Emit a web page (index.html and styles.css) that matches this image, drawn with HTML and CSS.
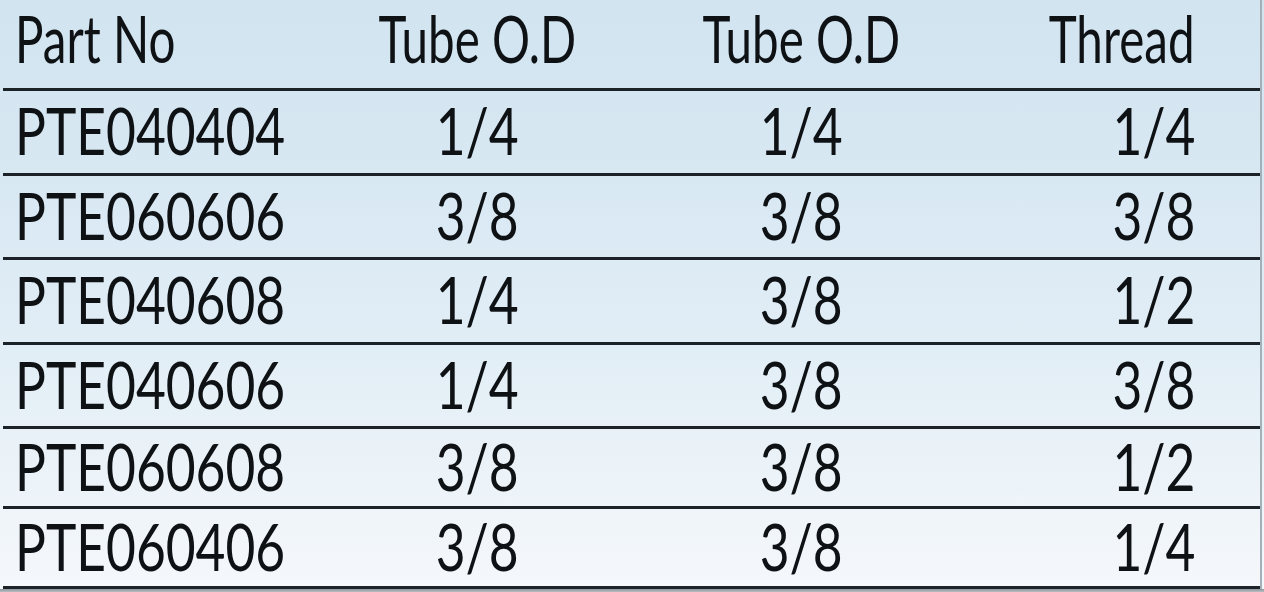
FILE: index.html
```html
<!DOCTYPE html>
<html lang="en">
<head>
<meta charset="utf-8">
<title>Part table</title>
<link rel="stylesheet" href="styles.css">
</head>
<body>
<div class="sheet">
  <div class="table">
    <div class="row head">
      <div class="c c1"><span class="t h">Part No</span></div>
      <div class="c c2"><span class="t h">Tube O.D</span></div>
      <div class="c c3"><span class="t h">Tube O.D</span></div>
      <div class="c c4"><span class="t h">Thread</span></div>
    </div>
    <div class="row">
      <div class="c c1"><span class="t">PTE040404</span></div>
      <div class="c c2"><span class="t">1/4</span></div>
      <div class="c c3"><span class="t">1/4</span></div>
      <div class="c c4"><span class="t">1/4</span></div>
    </div>
    <div class="row">
      <div class="c c1"><span class="t">PTE060606</span></div>
      <div class="c c2"><span class="t">3/8</span></div>
      <div class="c c3"><span class="t">3/8</span></div>
      <div class="c c4"><span class="t">3/8</span></div>
    </div>
    <div class="row">
      <div class="c c1"><span class="t">PTE040608</span></div>
      <div class="c c2"><span class="t">1/4</span></div>
      <div class="c c3"><span class="t">3/8</span></div>
      <div class="c c4"><span class="t">1/2</span></div>
    </div>
    <div class="row">
      <div class="c c1"><span class="t">PTE040606</span></div>
      <div class="c c2"><span class="t">1/4</span></div>
      <div class="c c3"><span class="t">3/8</span></div>
      <div class="c c4"><span class="t">3/8</span></div>
    </div>
    <div class="row">
      <div class="c c1"><span class="t">PTE060608</span></div>
      <div class="c c2"><span class="t">3/8</span></div>
      <div class="c c3"><span class="t">3/8</span></div>
      <div class="c c4"><span class="t">1/2</span></div>
    </div>
    <div class="row">
      <div class="c c1"><span class="t">PTE060406</span></div>
      <div class="c c2"><span class="t">3/8</span></div>
      <div class="c c3"><span class="t">3/8</span></div>
      <div class="c c4"><span class="t">1/4</span></div>
    </div>
  </div>
  <div class="shadow"></div>
</div>
</body>
</html>
```
FILE: styles.css
```css
html, body {
  margin: 0;
  padding: 0;
}
body {
  width: 1264px;
  height: 592px;
  overflow: hidden;
  font-family: Lato, "Open Sans", "Liberation Sans", sans-serif;
  color: #0f1215;
}
.sheet {
  width: 1264px;
  height: 592px;
  display: flex;
  flex-direction: column;
  background: linear-gradient(180deg, #d1e4f0 0%, #d8e8f3 30%, #e2eef6 60%, #eef4f9 85%, #f5f8fb 100%);
}
.table {
  margin-left: 3px;
  width: 1257px;
  display: grid;
  grid-template-rows: 91px 85px 84px 85px 84px 80px 80px;
  border-right: 2px solid #a3b0b8;
  box-sizing: content-box;
}
.row {
  box-sizing: border-box;
  display: grid;
  grid-template-columns: 314px 320px 328px 230px;
  border-bottom: 3px solid #1b2329;
  padding-bottom: 4px;
}
.row.head {
  padding-bottom: 13px;
}
.c {
  display: flex;
  align-items: center;
  font-size: 66px;
  line-height: 66px;
  white-space: nowrap;
}
.c1 {
  justify-content: flex-start;
  padding-left: 12px;
}
.c2, .c3 {
  justify-content: center;
}
.c4 {
  justify-content: flex-end;
}
.t {
  display: inline-block;
  transform: scaleX(0.78);
}
.t.h {
  transform: scaleX(0.72);
}
.c1 .t { transform-origin: left center; }
.c2 .t, .c3 .t { transform-origin: center center; }
.c4 .t { transform-origin: right center; }
.shadow {
  flex: 1;
  background: linear-gradient(180deg, #8e969c, #b9bec2);
}
```
